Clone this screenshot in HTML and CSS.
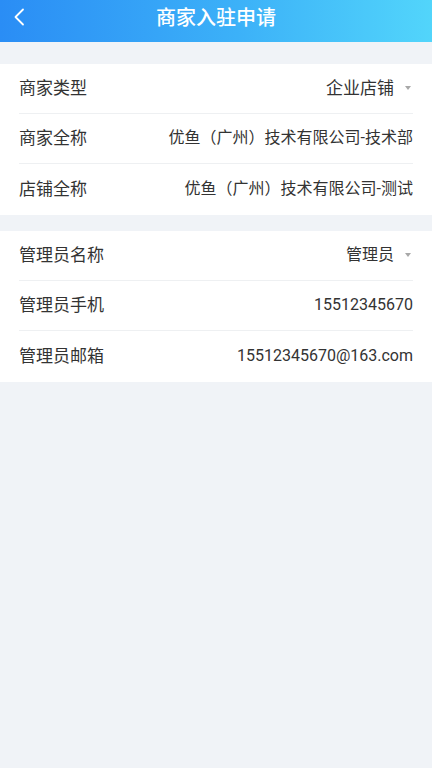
FILE: index.html
```html
<!DOCTYPE html>
<html lang="zh-CN">
<head>
<meta charset="utf-8">
<title>商家入驻申请</title>
<link rel="stylesheet" href="styles.css">
</head>
<body>
<header class="topbar">
  <span class="back">
    <svg width="12" height="18" viewBox="0 0 12 18"><path d="M10 1.5 L2.5 9 L10 16.5" fill="none" stroke="#fff" stroke-width="1.8" stroke-linecap="round" stroke-linejoin="round"/></svg>
  </span>
  <h1 class="title">商家入驻申请</h1>
</header>
<main class="page">
  <section class="group">
    <div class="row"><span class="label">商家类型</span><span class="value select big">企业店铺<i class="caret"></i></span></div>
    <div class="row"><span class="label">商家全称</span><span class="value">优鱼（广州）技术有限公司-技术部</span></div>
    <div class="row"><span class="label">店铺全称</span><span class="value">优鱼（广州）技术有限公司-测试</span></div>
  </section>
  <section class="group">
    <div class="row"><span class="label">管理员名称</span><span class="value select">管理员<i class="caret"></i></span></div>
    <div class="row"><span class="label">管理员手机</span><span class="value">15512345670</span></div>
    <div class="row"><span class="label">管理员邮箱</span><span class="value">15512345670@163.com</span></div>
  </section>
</main>
</body>
</html>
```
FILE: styles.css
```css
html, body {
  margin: 0;
  padding: 0;
}
body {
  width: 432px;
  min-height: 768px;
  background: #f0f3f7;
  font-family: Roboto, "Noto Sans CJK SC", sans-serif;
  color: #333;
}
.topbar {
  position: relative;
  height: 42px;
  background: linear-gradient(90deg, #2a8df5 0%, #3cb1f8 55%, #52d5fb 100%);
  display: flex;
  align-items: center;
  justify-content: center;
}
.back {
  position: absolute;
  left: 13px;
  top: 8px;
  width: 12px;
  height: 18px;
  display: flex;
}
.title {
  margin: 0 0 6px 0;
  font-size: 20px;
  font-weight: 500;
  color: #fff;
  line-height: 24px;
}
.page {
  padding-top: 22px;
  display: flex;
  flex-direction: column;
  gap: 16px;
}
.group {
  background: #fff;
  padding: 0 19px;
}
.row {
  height: 50px;
  display: flex;
  align-items: center;
  justify-content: space-between;
  border-bottom: 1px solid #eef0f2;
  box-sizing: border-box;
}
.row:last-child {
  border-bottom: none;
  height: 51px;
}
.label {
  font-size: 17px;
  color: #333;
  line-height: 20px;
  margin-top: -1px;
}
.value {
  font-size: 16px;
  color: #333;
  line-height: 20px;
  margin-top: -1px;
}
.value.big {
  font-size: 17px;
}
.select {
  display: flex;
  align-items: center;
}
.caret {
  display: block;
  width: 0;
  height: 0;
  margin-left: 11px;
  margin-right: 2px;
  border-left: 3px solid transparent;
  border-right: 3px solid transparent;
  border-top: 4px solid #a8a8a8;
}
```
